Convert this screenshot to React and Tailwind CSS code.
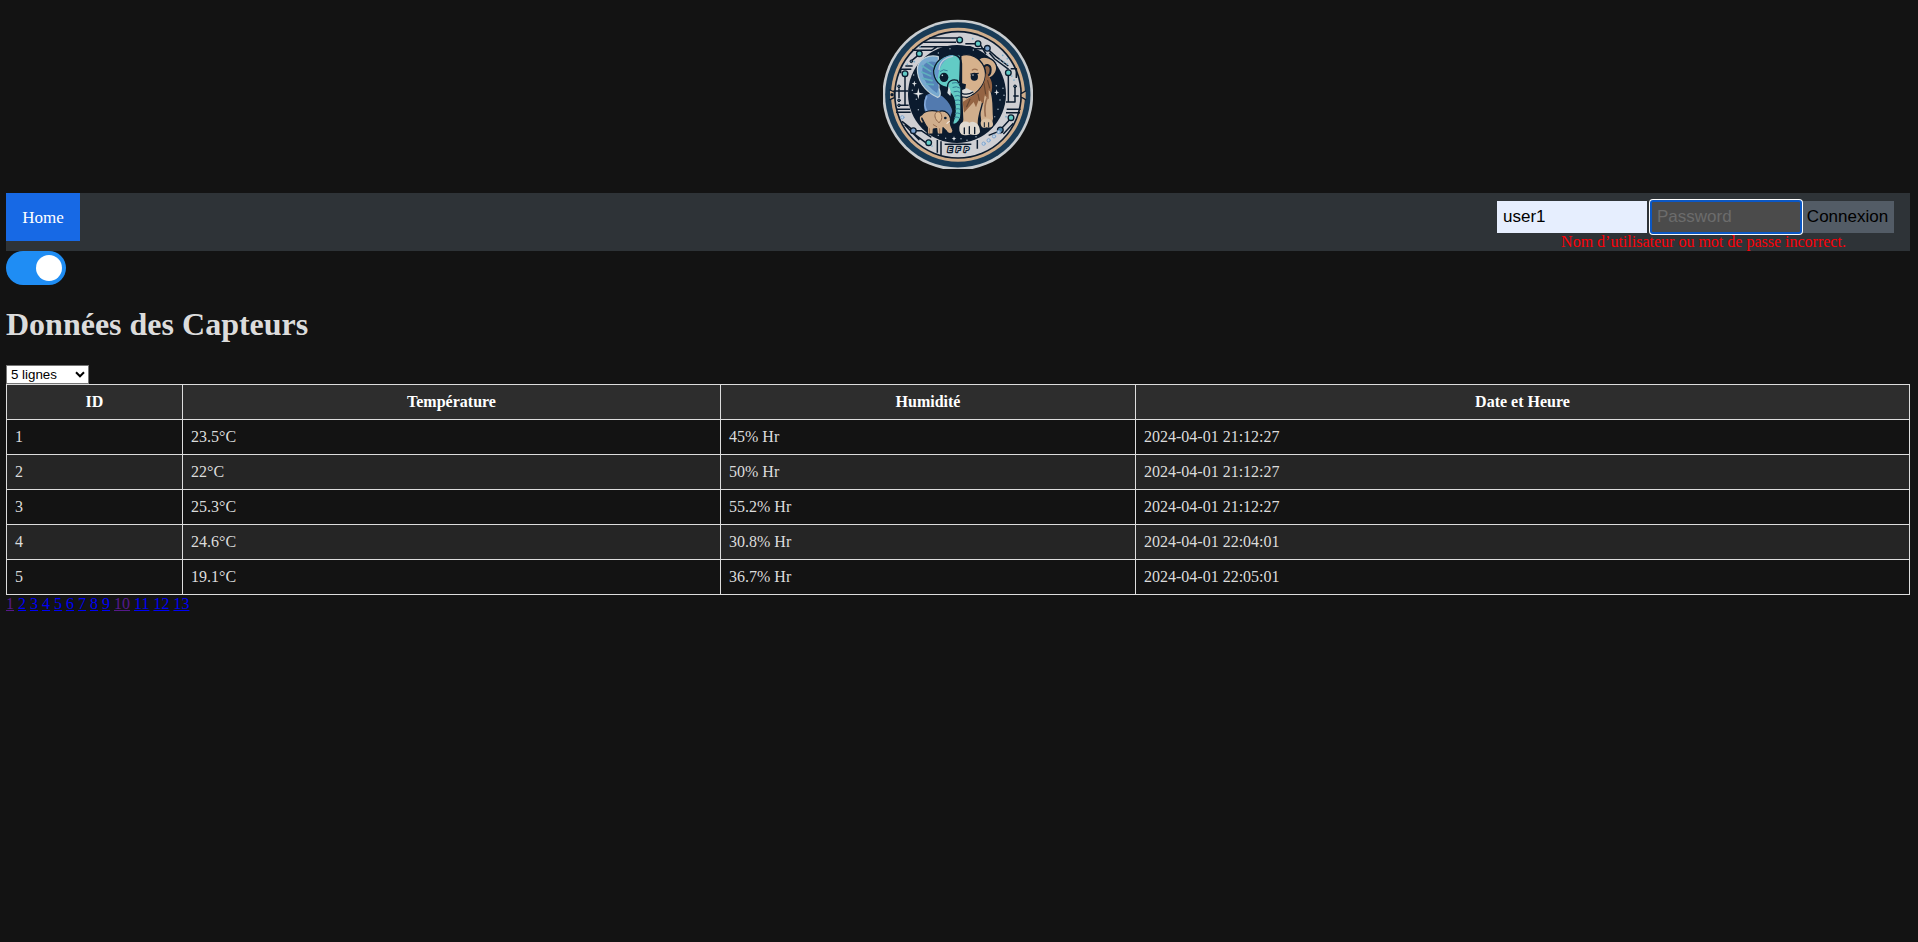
import React from "react";

const NAVY = "#0b1b2e";
const LIGHT = "#cfcfd3";
const TEAL = "#62cbc5";
const BLUE = "#5583b8";
const TAN = "#d0ae8c";

const nodes = [
  [269, 90, TEAL], [324, 101, TEAL], [352, 115, "#7ba3cf"], [148, 131, TEAL],
  [105, 191, TEAL], [415, 188, TEAL], [130, 362, "#7ba3cf"], [176, 398, TEAL],
  [391, 360, "#4f86a8"], [423, 323, TEAL],
];
const smallNodes = [[87, 229], [87, 271], [87, 286], [435, 229], [124, 154]];
const blueDots = [[398, 136], [412, 146], [390, 150], [402, 156], [412, 162], [425, 198], [432, 210], [150, 110], [133, 155], [112, 163], [408, 320], [186, 408], [308, 86]];
const blueRings = [[341, 401], [356, 391], [372, 379], [97, 322], [386, 366]];
const stars = [[205, 129], [310, 120], [240, 116], [352, 134], [378, 158], [127, 241], [139, 268], [145, 299], [379, 227], [390, 270], [399, 235], [384, 298], [227, 385], [273, 386], [291, 391], [165, 152], [131, 195], [374, 320], [205, 376], [318, 380], [402, 256]];

function Logo() {
  return (
    <svg className="block h-[150px] w-[150px]" viewBox="39 27 450 450" strokeLinecap="round" strokeLinejoin="round">
      <circle cx="263.5" cy="255" r="226" fill="#c9cdd0" />
      <circle cx="263.5" cy="254.5" r="218" fill="#193b56" />
      <circle cx="264" cy="254.5" r="201" fill={TAN} />
      <circle cx="264" cy="254.5" r="192" fill={NAVY} />
      <circle cx="264" cy="254.5" r="187" fill={LIGHT} />
      {/* circuit traces */}
      <g fill="none" stroke={NAVY} strokeWidth="4.5" strokeLinecap="butt">
        <path d="M178 84H262M286 101H318M160 97H258M148 110H208M126 121H184L202 110H300L314 116H346M356 120L378 140L415 168M358 128L374 147L416 178M332 106L348 132" />
        <path d="M144 136L126 151M106 168H128M105 197V284M92 190V178H124M87 235V264M70 243H114M87 286H116M78 298H120M78 307H122" />
        <path d="M415 196V276M435 234V276H408M422 176H439V204M410 298H452M408 308H450M446 258H430" />
        <path d="M96 334L126 358M130 370L170 400M137 362H154L184 382M104 344L148 390M202 390V428M213 394V436M224 403H304M322 390V416M396 354L418 330M386 364L356 376M400 372L430 340" />
      </g>
      <path d="M60 240l13 6v17l-13 6M467 243l-14 8v10l14 8" fill={TAN} stroke={NAVY} strokeWidth="4" />
      <circle cx="66" cy="254" r="5" fill={NAVY} />
      {nodes.map(([x, y, c]) => (
        <circle key={`${x}-${y}`} cx={x} cy={y} r="8.5" fill={c} stroke={NAVY} strokeWidth="4" />
      ))}
      {smallNodes.map(([x, y]) => (
        <circle key={`${x}-${y}`} cx={x} cy={y} r="4" fill="#48677d" stroke={NAVY} strokeWidth="3" />
      ))}
      {blueDots.map(([x, y]) => (
        <circle key={`${x}-${y}`} cx={x} cy={y} r="2.6" fill="#7badc9" />
      ))}
      {blueRings.map(([x, y]) => (
        <circle key={`${x}-${y}`} cx={x} cy={y} r="5" fill="#c7d5e4" stroke="#7fa6cf" strokeWidth="3" />
      ))}
      {/* night sky disc */}
      <circle cx="261" cy="252" r="147" fill={NAVY} />
      {stars.map(([x, y]) => (
        <circle key={`${x}-${y}`} cx={x} cy={y} r="2.2" fill="#a9b7c2" />
      ))}
      <path d="M145 234l3 14 13 3-13 3-3 14-3-14-13-3 13-3zM133 212l2 7 6 2-6 2-2 7-2-7-6-2 6-2zM380 238l2 7 6 2-6 2-2 7-2-7-6-2 6-2zM252 379l2 5 5 2-5 2-2 5-2-5-5-2 5-2z" fill="#e3e6e8" />
      {/* lion */}
      <g stroke={NAVY} strokeWidth="4">
        <path d="M330 215L362 240C372 268 368 288 371 325L366 352H334L328 300L316 258Z" fill={TAN} />
        <path d="M275 262L340 245C345 280 325 302 325 340L330 370L318 375H272L268 358L278 330Z" fill={TAN} />
        <path d="M326 148C340 134 372 145 379 166C385 188 366 206 348 207Z" fill={TAN} />
        <path d="M342 174C344 160 362 163 362 179C362 191 356 199 347 200Z" fill="#8d6448" strokeWidth="6" />
        <path d="M272 137C302 126 330 145 342 170C352 194 347 224 316 250L290 263L272 256Z" fill="#d6b18c" />
      </g>
      <path d="M347 190C368 205 369 230 364 248L356 240L356 268L344 256L340 282L327 268L318 292L311 276L282 308L278 276L309 256C334 240 347 215 347 190Z" fill="#956443" />
      <path d="M342 220L347 252M353 212L359 234M324 252L328 272M300 268L290 290" fill="none" stroke="#66452f" strokeWidth="3.5" />
      <path d="M275 234C291 230 301 244 313 243C306 257 294 263 275 258Z" fill="#dddad6" />
      <path d="M274 219L288 223L286 236L276 240Z" fill={NAVY} />
      <path d="M275 250C286 254 299 253 309 246" fill="none" stroke={NAVY} strokeWidth="3.5" />
      <path d="M307 180q7-5 15 0" fill="none" stroke="#9b7052" strokeWidth="4" />
      <path d="M302 192L325 190" stroke={NAVY} strokeWidth="3" />
      <ellipse cx="313" cy="200" rx="11" ry="12" fill={NAVY} />
      <circle cx="309" cy="195" r="2" fill="#fff" />
      <path d="M268 356C267 336 286 330 298 338C312 330 330 342 330 365C328 377 310 376 301 373C290 378 267 378 268 356Z" fill="#dfd9d0" />
      <path d="M283 354V371M298 350V371M314 352V371" fill="none" stroke={NAVY} strokeWidth="4" />
      <path d="M332 340C332 322 365 320 369 341C370 353 357 354 349 352C339 357 332 350 332 340Z" fill="#dac0a2" />
      <path d="M343 338V351M356 338V351" fill="none" stroke={NAVY} strokeWidth="3" />
      <path d="M352 262C344 280 343 298 346 318" fill="none" stroke="#9b7052" strokeWidth="5" />
      {/* elephant */}
      <path d="M166 255L190 243C215 254 240 267 249 303L240 330L164 310C158 290 160 272 166 255Z" fill="#527aaf" stroke={NAVY} strokeWidth="4" />
      <path d="M170 260C160 280 164 294 172 306" fill="none" stroke="#83a9da" strokeWidth="5" />
      <path d="M205 140C178 133 143 145 142 178C142 210 162 243 202 262C215 259 211 245 207 235Z" fill="#78a9cf" stroke="#c3d3da" strokeWidth="3.5" />
      <path d="M197 156C174 150 156 161 157 184C158 207 175 233 201 249L206 232Z" fill={BLUE} />
      <path d="M157 168L182 184M155 186L182 198M159 205L186 212M170 222L190 224M172 157L190 170" stroke="#5fb0bd" strokeWidth="5" />
      <path d="M272 136C236 124 198 145 191 181C190 212 212 231 233 232L239 247L268 253Z" fill={TEAL} stroke={NAVY} strokeWidth="4" />
      <path d="M194 184C202 151 226 137 251 136C218 149 207 170 203 209C197 202 194 194 194 184Z" fill="#6997cc" />
      <path d="M207 178C210 154 228 141 248 139" fill="none" stroke="#b8ced8" strokeWidth="4" />
      <path d="M233 232C231 214 247 206 262 211L274 234V309C274 327 264 343 250 344C244 337 254 328 255 313C257 282 254 258 237 246Z" fill={TEAL} stroke={NAVY} strokeWidth="4" />
      <path d="M247 219q11-4 21 2M249 232q10-5 21 2M252 245q10-4 19 2M255 258q9-4 17 1M256 271q9-3 16 1M257 284q8-3 15 1M257 297q8-3 15 1M256 310q8-3 14 1M254 322q8-3 13 1" fill="none" stroke="#347e98" strokeWidth="3" />
      <path d="M236 229C242 240 244 250 241 258L232 249Z" fill="#d6dde0" />
      <ellipse cx="222" cy="202" rx="13" ry="14" fill={NAVY} />
      <circle cx="217" cy="196" r="2.5" fill="#d9eeee" />
      <path d="M211 184q9-9 21-2" fill="none" stroke="#347e98" strokeWidth="3" />
      <path d="M250 133C265 136 273 145 274 161V320" fill="none" stroke={NAVY} strokeWidth="5" />
      {/* calf */}
      <path d="M153 320C160 300 189 300 205 305C226 296 245 314 241 339C242 350 248 357 249 362C249 373 232 374 229 363L219 353L218 372H202L200 356L190 357L189 372H172L172 352C164 344 161 332 153 320Z" fill={TAN} stroke={NAVY} strokeWidth="3.5" />
      <path d="M162 318C150 318 148 326 156 336" fill="none" stroke={TAN} strokeWidth="4" />
      <path d="M209 306C193 300 188 324 207 338C217 331 219 315 209 306Z" fill="#dcb992" stroke="#8c6449" strokeWidth="3" />
      <path d="M178 356V368M209 356V368M190 344L200 350" stroke="#9a7153" strokeWidth="3" />
      <circle cx="226" cy="324" r="4" fill={NAVY} />
      <path d="M231 340q5-2 7-6" fill="none" stroke="#fff" strokeWidth="3" />
      {/* name plate */}
      <path d="M219 405H315V429Q267 437 219 429Z" fill={LIGHT} />
      <text x="270" y="426" textAnchor="middle" fontFamily="Liberation Sans, sans-serif" fontSize="21" fontStyle="italic" fontWeight="700" letterSpacing="11" fill="#c5cace" stroke={NAVY} strokeWidth="7" paintOrder="stroke">EFP</text>
    </svg>
  );
}

const rows = [
  ["1", "23.5°C", "45% Hr", "2024-04-01 21:12:27"],
  ["2", "22°C", "50% Hr", "2024-04-01 21:12:27"],
  ["3", "25.3°C", "55.2% Hr", "2024-04-01 21:12:27"],
  ["4", "24.6°C", "30.8% Hr", "2024-04-01 22:04:01"],
  ["5", "19.1°C", "36.7% Hr", "2024-04-01 22:05:01"],
];
const pages = Array.from({ length: 13 }, (_, i) => i + 1);

export default function App() {
  return (
    <div className="min-h-screen bg-[#131313] pl-1.5 pr-2 font-['Liberation_Serif',serif] text-base text-[#dcdcdc]">
      <header className="flex h-[193px] justify-center pt-[19px]">
        <Logo />
      </header>

      <nav className="flex h-[58px] items-start justify-between bg-[#2e3337]">
        <a className="flex h-12 w-[74px] items-center justify-center bg-[#1769e5] pt-px text-[17px] text-white">Home</a>
        <form className="w-[413px] pt-2" onSubmit={(e) => e.preventDefault()}>
          <div className="flex h-8 font-['Liberation_Sans',sans-serif] text-[17px]">
            <input className="mr-1 w-[150px] bg-[#e6eefe] px-1.5 text-black outline-none" defaultValue="user1" />
            <input
              type="password"
              placeholder="Password"
              className="relative w-[150px] rounded-[2px] bg-[#4b4b4b] px-1.5 ring-2 ring-white outline-2 -outline-offset-1 outline-[#0b57c4] placeholder:text-[#6c6c6c]"
            />
            <button className="w-[93px] bg-[#535c66] text-black">Connexion</button>
          </div>
          <p className="text-center text-[16px] leading-[18px] text-[#fb0007]">Nom d’utilisateur ou mot de passe incorrect.</p>
        </form>
      </nav>

      <button role="switch" aria-checked="true" className="flex h-[34px] w-[60px] items-center justify-end rounded-full bg-[#1f8df4] pr-1">
        <span className="size-[26px] rounded-full bg-white" />
      </button>

      <h1 className="mt-[21px] h-[59px] text-[32px] leading-9 font-bold">Données des Capteurs</h1>

      <div className="flex h-[19px] w-[83px] items-center justify-between border border-[#767676] bg-white pr-[3px] pl-1 font-['Liberation_Sans',sans-serif] text-[13.33px] leading-none text-black">
        <span>5 lignes</span>
        <svg className="h-[7px] w-[10px]" viewBox="0 0 10 7" fill="none" stroke="#000" strokeWidth="2">
          <path d="M1 1.3l4 4 4-4" />
        </svg>
      </div>

      <table className="w-full table-fixed border-collapse leading-[18px]">
        <colgroup>
          <col className="w-[176px]" />
          <col className="w-[538px]" />
          <col className="w-[415px]" />
          <col />
        </colgroup>
        <thead>
          <tr className="h-[35px] bg-[#2d2d2d] text-white">
            {["ID", "Température", "Humidité", "Date et Heure"].map((h) => (
              <th key={h} className="border border-[#dddddd] p-2 text-center font-bold">{h}</th>
            ))}
          </tr>
        </thead>
        <tbody>
          {rows.map((r) => (
            <tr key={r[0]} className="h-[35px] even:bg-[#252525]">
              {r.map((c, i) => (
                <td key={i} className="border border-[#dddddd] p-2">{c}</td>
              ))}
            </tr>
          ))}
        </tbody>
      </table>

      <div className="flex gap-1 leading-[18px]">
        {pages.map((p) => (
          <a key={p} className={p === 1 || p === 10 ? "text-[#551a8b] underline" : "text-[#0000f5] underline"}>{p}</a>
        ))}
      </div>
    </div>
  );
}
